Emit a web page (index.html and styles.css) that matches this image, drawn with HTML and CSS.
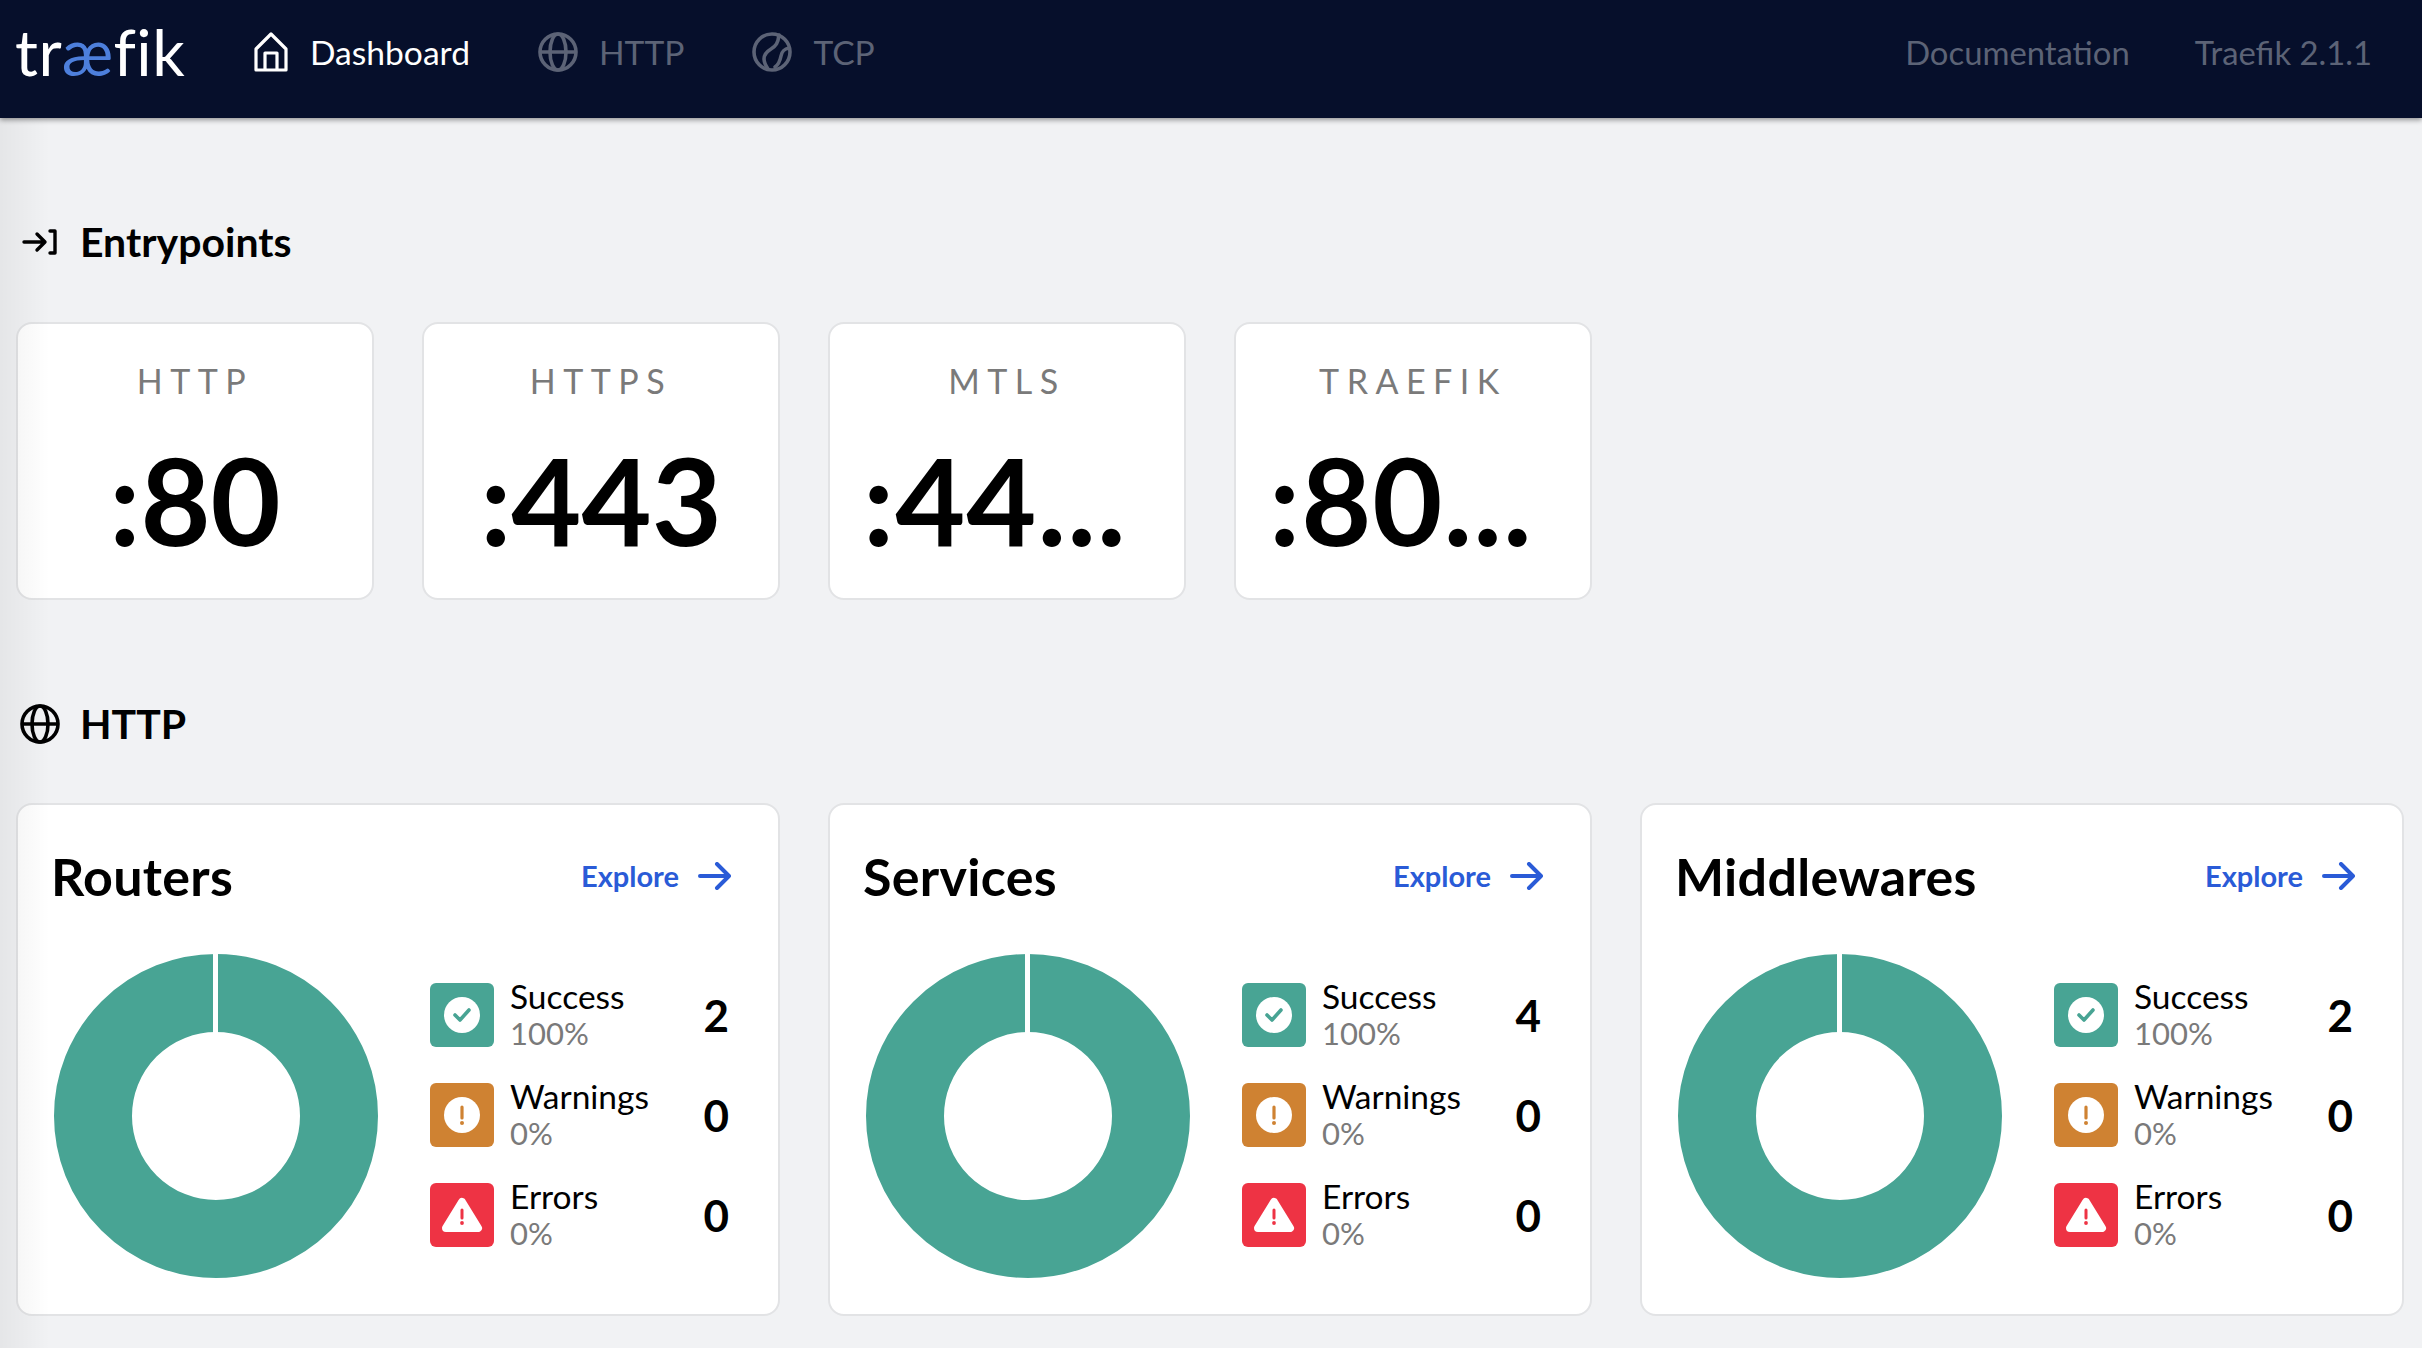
FILE: index.html
```html
<!DOCTYPE html>
<html lang="en">
<head>
<meta charset="utf-8">
<title>Traefik</title>
<link rel="stylesheet" href="styles.css">
</head>
<body>
<svg class="defs" width="0" height="0">
  <symbol id="globe" viewBox="0 0 40 40"><g fill="none" stroke="currentColor" stroke-width="3.6"><circle cx="20" cy="20" r="18"/><ellipse cx="20" cy="20" rx="8" ry="18"/><path d="M2 20h36"/></g></symbol>
  <symbol id="ball" viewBox="0 0 40 40"><g fill="none" stroke="currentColor" stroke-width="3.6" stroke-linecap="round"><circle cx="20" cy="20" r="18"/><path d="M27 3c-1 8-3 11-8 14s-7 6-7 10c0 4 2 7 4 10"/><path d="M37 16c-5 1-7 3-8 8s-3 9-6 11"/></g></symbol>
  <symbol id="arrow" viewBox="0 0 34 28"><path d="M2 14h29M19 2l12 12-12 12" fill="none" stroke="currentColor" stroke-width="4" stroke-linecap="round" stroke-linejoin="round"/></symbol>
  <symbol id="donut" viewBox="0 0 326 326"><circle cx="163" cy="163" r="123" fill="none" stroke="#48a494" stroke-width="78"/><rect x="160" y="0" width="5" height="85" fill="#fff"/></symbol>
  <symbol id="check" viewBox="0 0 36 36"><circle cx="18" cy="18" r="18" fill="#fff"/><path d="M11 18l5 5 9-10" fill="none" stroke="#48a494" stroke-width="3.6" stroke-linecap="round" stroke-linejoin="round"/></symbol>
  <symbol id="warn" viewBox="0 0 36 36"><circle cx="18" cy="18" r="18" fill="#fff"/><path d="M18 10v11" stroke="#cf8232" stroke-width="3.2" stroke-linecap="round"/><circle cx="18" cy="26" r="2" fill="#cf8232"/></symbol>
  <symbol id="err" viewBox="0 0 42 36"><path d="M21 5L37 31H5z" fill="#fff" stroke="#fff" stroke-width="8" stroke-linejoin="round"/><path d="M21 13v8" stroke="#ee3344" stroke-width="3" stroke-linecap="round"/><circle cx="21" cy="26" r="1.9" fill="#ee3344"/></symbol>
</svg>

<header class="nav">
  <div class="logo">tr<span class="logo-ae">æ</span>fik</div>
  <a class="nav-link active">
    <svg class="nav-icon home" viewBox="0 0 36 40"><path d="M18 2L3 17v21h30V17zM12 38V21h12v17" fill="none" stroke="currentColor" stroke-width="3.2" stroke-linejoin="round"/></svg>
    Dashboard
  </a>
  <a class="nav-link"><svg class="nav-icon"><use href="#globe"/></svg>HTTP</a>
  <a class="nav-link"><svg class="nav-icon"><use href="#ball"/></svg>TCP</a>
  <div class="nav-right">
    <a class="nav-link">Documentation</a>
    <a class="nav-link">Traefik 2.1.1</a>
  </div>
</header>

<div class="edge-shade"></div>

<main class="main">
  <h2 class="section-title">
    <svg class="section-icon entry" viewBox="0 0 36 28"><path d="M2 14h20M15 6l8 8-8 8M28 3h5v22h-5" fill="none" stroke="currentColor" stroke-width="3.4" stroke-linecap="round" stroke-linejoin="round"/></svg>
    Entrypoints
  </h2>
  <section class="entry-grid">
    <div class="card entry-card"><div class="entry-name">HTTP</div><div class="entry-port">:80</div></div>
    <div class="card entry-card"><div class="entry-name">HTTPS</div><div class="entry-port">:443</div></div>
    <div class="card entry-card"><div class="entry-name">MTLS</div><div class="entry-port clipped">:44...</div></div>
    <div class="card entry-card"><div class="entry-name">TRAEFIK</div><div class="entry-port clipped">:80...</div></div>
  </section>

  <h2 class="section-title second">
    <svg class="section-icon globe-title"><use href="#globe"/></svg>
    HTTP
  </h2>
  <section class="panel-grid">
    <article class="card panel">
      <div class="panel-head"><h3 class="panel-title">Routers</h3><a class="explore">Explore<svg class="explore-arrow"><use href="#arrow"/></svg></a></div>
      <div class="panel-body">
        <svg class="donut"><use href="#donut"/></svg>
        <div class="stats">
          <div class="stat"><span class="badge ok"><svg class="badge-icon"><use href="#check"/></svg></span><div class="stat-text"><div class="stat-label">Success</div><div class="stat-pct">100%</div></div><div class="stat-num">2</div></div>
          <div class="stat"><span class="badge warn"><svg class="badge-icon"><use href="#warn"/></svg></span><div class="stat-text"><div class="stat-label">Warnings</div><div class="stat-pct">0%</div></div><div class="stat-num">0</div></div>
          <div class="stat"><span class="badge bad"><svg class="badge-icon wide"><use href="#err"/></svg></span><div class="stat-text"><div class="stat-label">Errors</div><div class="stat-pct">0%</div></div><div class="stat-num">0</div></div>
        </div>
      </div>
    </article>
    <article class="card panel">
      <div class="panel-head"><h3 class="panel-title">Services</h3><a class="explore">Explore<svg class="explore-arrow"><use href="#arrow"/></svg></a></div>
      <div class="panel-body">
        <svg class="donut"><use href="#donut"/></svg>
        <div class="stats">
          <div class="stat"><span class="badge ok"><svg class="badge-icon"><use href="#check"/></svg></span><div class="stat-text"><div class="stat-label">Success</div><div class="stat-pct">100%</div></div><div class="stat-num">4</div></div>
          <div class="stat"><span class="badge warn"><svg class="badge-icon"><use href="#warn"/></svg></span><div class="stat-text"><div class="stat-label">Warnings</div><div class="stat-pct">0%</div></div><div class="stat-num">0</div></div>
          <div class="stat"><span class="badge bad"><svg class="badge-icon wide"><use href="#err"/></svg></span><div class="stat-text"><div class="stat-label">Errors</div><div class="stat-pct">0%</div></div><div class="stat-num">0</div></div>
        </div>
      </div>
    </article>
    <article class="card panel">
      <div class="panel-head"><h3 class="panel-title">Middlewares</h3><a class="explore">Explore<svg class="explore-arrow"><use href="#arrow"/></svg></a></div>
      <div class="panel-body">
        <svg class="donut"><use href="#donut"/></svg>
        <div class="stats">
          <div class="stat"><span class="badge ok"><svg class="badge-icon"><use href="#check"/></svg></span><div class="stat-text"><div class="stat-label">Success</div><div class="stat-pct">100%</div></div><div class="stat-num">2</div></div>
          <div class="stat"><span class="badge warn"><svg class="badge-icon"><use href="#warn"/></svg></span><div class="stat-text"><div class="stat-label">Warnings</div><div class="stat-pct">0%</div></div><div class="stat-num">0</div></div>
          <div class="stat"><span class="badge bad"><svg class="badge-icon wide"><use href="#err"/></svg></span><div class="stat-text"><div class="stat-label">Errors</div><div class="stat-pct">0%</div></div><div class="stat-num">0</div></div>
        </div>
      </div>
    </article>
  </section>
</main>
</body>
</html>
```

FILE: styles.css
```css
* { box-sizing: border-box; }
html, body { height: 100%; }
body {
  margin: 0;
  height: 1348px;
  overflow: hidden;
  background: #f1f2f4;
  color: #000;
  font-family: "Lato", "Open Sans", sans-serif;
  position: relative;
}
.defs { position: absolute; }

.nav {
  height: 118px;
  background: #060f2b;
  box-shadow: 0 2px 5px rgba(0,0,0,.4);
  display: flex;
  align-items: center;
  padding: 0 50px 14px 15px;
  position: relative;
  font-size: 33.6px;
}
.logo {
  color: #fff;
  font-size: 64px;
  font-weight: 400;
  line-height: 1;
  width: 238px;
  flex: none;
  letter-spacing: .5px;
  font-variant-ligatures: none;
}
.logo-ae { color: #4d7fdc; }
.nav-link {
  display: flex;
  align-items: center;
  gap: 21px;
  color: #5c6376;
  margin-right: 68px;
  white-space: nowrap;
}
.nav-link.active { color: #fff; }
.nav-icon { width: 40px; height: 40px; flex: none; }
.nav-icon.home { width: 36px; }
.nav-right { margin-left: auto; display: flex; font-size: 32.8px; }
.nav-right .nav-link { margin: 0 0 0 65px; }

.edge-shade {
  position: absolute;
  left: 0;
  top: 118px;
  bottom: 0;
  width: 50px;
  background: linear-gradient(90deg, rgba(0,0,0,.05), rgba(0,0,0,0));
  pointer-events: none;
}

.main { padding: 94px 0 0 16px; }

.section-title {
  display: flex;
  align-items: center;
  gap: 20px;
  margin: 0;
  height: 60px;
  font-size: 41px;
  font-weight: 700;
  line-height: 60px;
}
.section-title.second { margin-top: 94px; }
.section-icon { width: 40px; height: 40px; flex: none; }
.section-icon.entry { width: 36px; height: 28px; margin: 0 2px 0 6px; }
.section-icon.globe-title { margin-left: 4px; }

.entry-grid {
  display: grid;
  grid-template-columns: repeat(4, 358px);
  gap: 48px;
  margin-top: 50px;
}
.card {
  background: #fff;
  border: 2px solid #e2e3e5;
  border-radius: 16px;
}
.entry-card {
  height: 278px;
  text-align: center;
  padding: 0 12px;
}
.entry-name {
  margin-top: 36px;
  font-size: 34px;
  line-height: 42px;
  letter-spacing: 7.5px;
  color: #7a7a7a;
}
.entry-port {
  margin-top: 35px;
  font-size: 121px;
  line-height: 126px;
  font-weight: 700;
  white-space: nowrap;
}
.entry-port.clipped { text-align: left; padding-left: 21px; letter-spacing: 1px; }

.panel-grid {
  display: grid;
  grid-template-columns: repeat(3, 764px);
  gap: 48px;
  margin-top: 49px;
}
.panel { height: 513px; padding: 0 33px; }
.panel-head {
  display: flex;
  align-items: center;
  justify-content: space-between;
  height: 64px;
  margin-top: 39px;
}
.panel-title {
  margin: 0;
  font-size: 52px;
  line-height: 64px;
  font-weight: 700;
  letter-spacing: .3px;
}
.explore {
  display: flex;
  align-items: center;
  gap: 19px;
  font-size: 29px;
  font-weight: 700;
  color: #2a5bd7;
  margin: -1px 13px 0 0;
}
.explore-arrow { width: 34px; height: 28px; }

.panel-body {
  display: flex;
  align-items: flex-start;
  margin-top: 45px;
}
.donut { width: 326px; height: 326px; flex: none; margin-left: 2px; }
.stats { margin-left: 51px; flex: 1; margin-top: 30px; }
.stat {
  display: flex;
  align-items: center;
  height: 64px;
  margin-bottom: 36px;
}
.badge {
  width: 64px;
  height: 64px;
  border-radius: 6px;
  display: flex;
  align-items: center;
  justify-content: center;
  flex: none;
}
.badge.ok { background: #48a494; }
.badge.warn { background: #cf8232; }
.badge.bad { background: #ee3344; }
.badge-icon { width: 36px; height: 36px; }
.badge-icon.wide { width: 42px; }
.stat-text { margin-left: 16px; flex: 1; }
.stat-label { font-size: 33.5px; line-height: 37px; }
.stat-pct { font-size: 31px; line-height: 37px; color: #7a7a7a; }
.stat-num {
  font-size: 44px;
  font-weight: 700;
  width: 50px;
  margin-right: 16px;
  text-align: right;
  line-height: 60px;
}
```
